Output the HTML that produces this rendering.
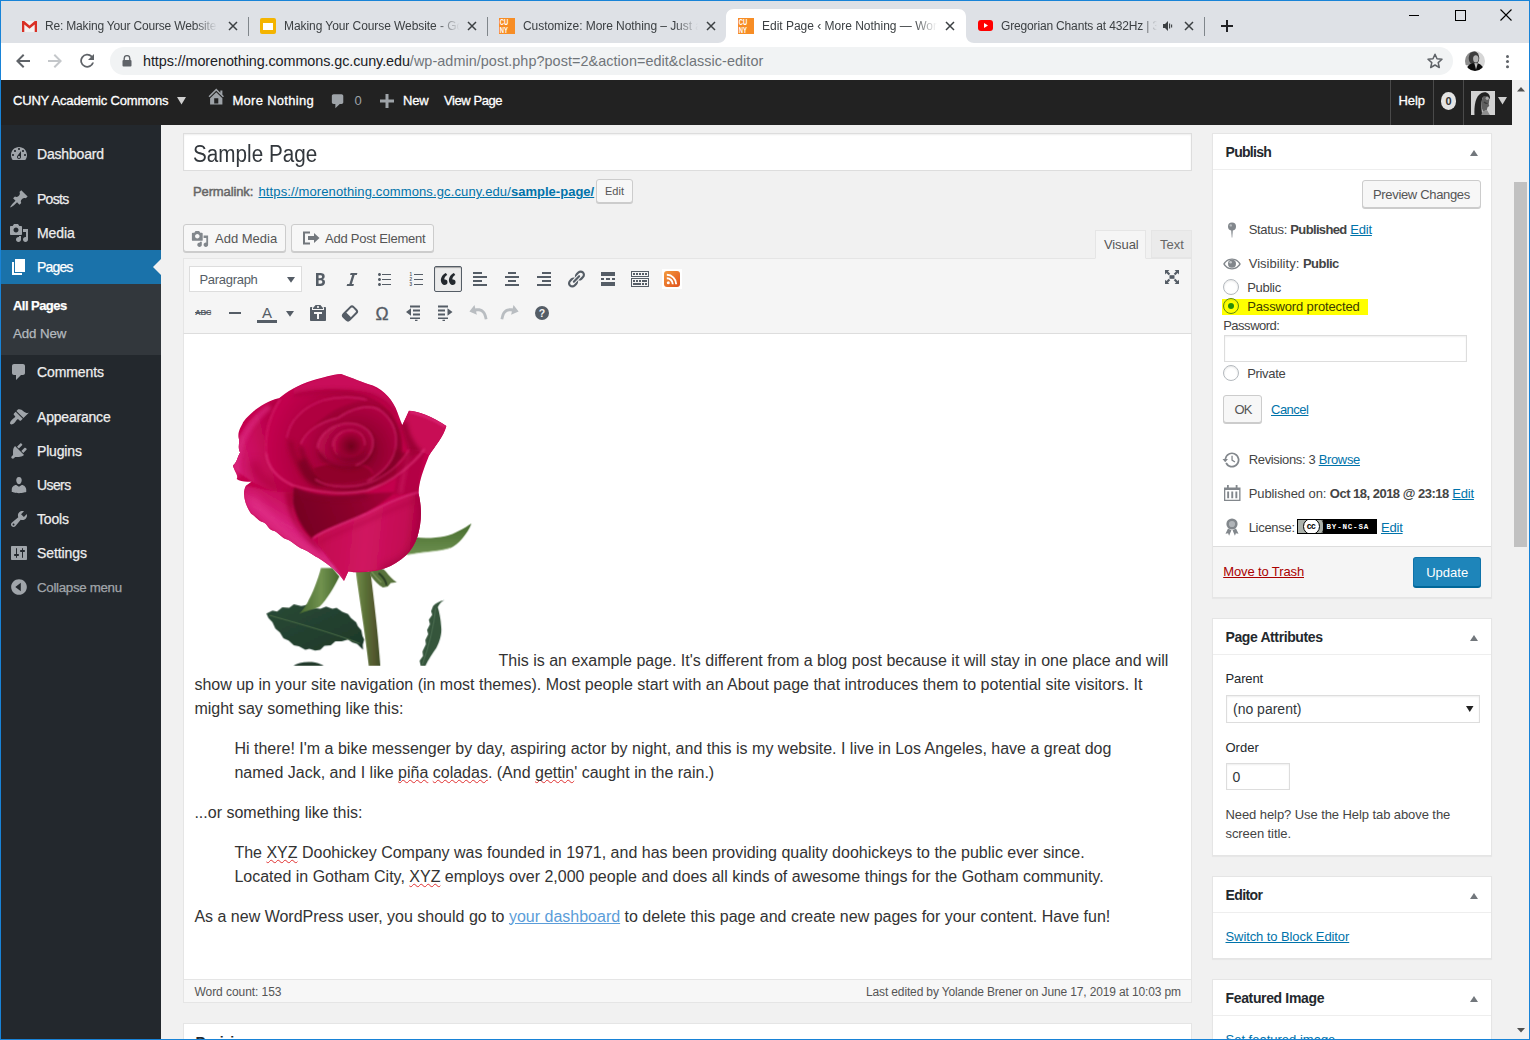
<!DOCTYPE html>
<html>
<head>
<meta charset="utf-8">
<title>Edit Page</title>
<style>
*{box-sizing:border-box;margin:0;padding:0}
html,body{width:1530px;height:1040px;overflow:hidden;background:#f1f1f1;font-family:"Liberation Sans",sans-serif;}
body{position:relative}
.abs{position:absolute}
.t{position:absolute;white-space:nowrap;line-height:1}
a{color:#0073aa;text-decoration:underline}
/* ---------- chrome frame ---------- */
#frame{position:absolute;left:0;top:0;width:1530px;height:1040px;border:1px solid #1883d7;pointer-events:none;z-index:100}
#tabstrip{position:absolute;left:0;top:0;width:1530px;height:43px;background:#dee1e6}
#toolbar{position:absolute;left:0;top:43px;width:1530px;height:37px;background:#fff}
#pill{position:absolute;left:110px;top:47px;width:1343px;height:28px;border-radius:14px;background:#f1f3f4}
.tabt{position:absolute;top:19px;font-size:12px;color:#3c4043;white-space:nowrap;line-height:14px;overflow:hidden;letter-spacing:0}
.tabx{position:absolute;top:20px;width:12px;height:12px}
.tsep{position:absolute;top:17px;width:1px;height:19px;background:#80868b}
#acttab{position:absolute;left:729px;top:9px;width:238px;height:33px;background:#fff;border-radius:8px 8px 0 0}

.cuny{width:16px;height:16px;background:#f68b1f;overflow:hidden}
.cuny:before{content:"CU";position:absolute;left:1px;top:0px;font:bold 7.5px/8px "Liberation Sans",sans-serif;color:#fff;letter-spacing:-0.3px;transform:scale(0.9,1.1);transform-origin:0 0}
.cuny:after{content:"NY";position:absolute;left:1px;top:8px;font:bold 7.5px/8px "Liberation Sans",sans-serif;color:#fff;letter-spacing:-0.3px;transform:scale(0.9,1.1);transform-origin:0 0}
/* ---------- wp admin bar ---------- */
#wpbar{position:absolute;left:1px;top:80px;width:1511px;height:45px;background:#222}
.wb{position:absolute;top:93px;font-size:13px;color:#fff;white-space:nowrap;line-height:15px;letter-spacing:-0.1px;-webkit-text-stroke:0.3px #fff}
/* ---------- sidebar ---------- */
#side{position:absolute;left:1px;top:125px;width:160px;height:915px;background:#23282d}
.mi{position:absolute;left:37px;-webkit-text-stroke:0.25px;font-size:14px;color:#eee;white-space:nowrap;line-height:16px;letter-spacing:-0.15px}
.ic{position:absolute;left:9px;width:20px;height:20px;fill:#a0a5aa}

/* ---------- main ---------- */
.btn{position:absolute;background:#f7f7f7;border:1px solid #ccc;border-radius:3px;box-shadow:0 1px 0 #ccc;color:#555;font-size:13px;text-align:center;white-space:nowrap}
.tb{position:absolute;width:20px;height:20px;fill:#555d66}
#ed p{margin:0 0 16px 0}
#ed blockquote{margin:0 40px 16px 40px}
u.sp{text-decoration:underline wavy #e03030;text-decoration-thickness:1px;text-underline-offset:0.5px;text-decoration-skip-ink:none}

/* ---------- right ---------- */
.box{position:absolute;background:#fff;border:1px solid #e5e5e5;box-shadow:0 1px 1px rgba(0,0,0,.04)}
.hd{position:absolute;font:bold 14px/17px "Liberation Sans",sans-serif;color:#23282d;white-space:nowrap}
.r{position:absolute;font-size:13px;line-height:16px;color:#444;white-space:nowrap;margin-top:1px}
.tri{position:absolute;width:8px;height:6px;fill:#72777c}
.rad{position:absolute;width:16px;height:16px;border-radius:8px;background:#fff;border:1px solid #b4b9be;box-shadow:inset 0 1px 2px rgba(0,0,0,.1)}
/* ---------- scrollbar ---------- */
#sb{position:absolute;left:1512px;top:80px;width:17px;height:959px;background:#f1f1f1}
#sbt{position:absolute;left:1514px;top:182px;width:13px;height:365px;background:#c1c1c1}
</style>
</head>
<body>
<!-- CHROME -->
<div id="tabstrip"></div>
<svg class="abs" style="left:716px;top:9px" width="260" height="34" viewBox="716 9 260 34"><path d="M718 43C722 43 726 40 726 35L726 17C726 12 729 9 734 9L958 9C963 9 966 12 966 17L966 35C966 40 970 43 974 43Z" fill="#fff"/></svg>
<div id="toolbar"></div>
<div id="pill"></div>

<!-- tab 1 -->
<svg class="abs" style="left:22px;top:21px" width="15" height="11" viewBox="0 0 15 11"><rect x="0" y="0" width="15" height="11" fill="#f2f2f2"/><path d="M0 0h2.2l5.3 4.6L12.8 0H15v11h-2.3V3.4L7.5 7.8 2.3 3.4V11H0z" fill="#d93025"/></svg>
<div class="tabt" style="letter-spacing:-0.18px;left:45px;width:172px;-webkit-mask-image:linear-gradient(90deg,#000 150px,transparent 172px)">Re: Making Your Course Website</div>
<svg class="tabx" style="left:227px" viewBox="0 0 12 12"><path d="M2 2l8 8M10 2l-8 8" stroke="#3c4043" stroke-width="1.5" fill="none"/></svg>
<div class="tsep" style="left:248px"></div>
<!-- tab 2 -->
<div class="abs" style="left:260px;top:18px;width:16px;height:16px;border-radius:2px;background:#f4b400"></div>
<div class="abs" style="left:263px;top:23px;width:10px;height:7px;background:#fff"></div>
<div class="tabt" style="letter-spacing:-0.07px;left:284px;width:176px;-webkit-mask-image:linear-gradient(90deg,#000 152px,transparent 176px)">Making Your Course Website - Google Slides</div>
<svg class="tabx" style="left:466px" viewBox="0 0 12 12"><path d="M2 2l8 8M10 2l-8 8" stroke="#3c4043" stroke-width="1.5" fill="none"/></svg>
<div class="tsep" style="left:487px"></div>
<!-- tab 3 -->
<svg class="abs" style="left:499px;top:18px" width="16" height="16" viewBox="0 0 16 16"><rect width="16" height="16" fill="#f78d25"/><g fill="#fff" font-family="Liberation Sans" font-weight="bold" font-size="8.200"><text transform="translate(0.800 7.300) scale(0.720 1.120)">CU</text><text transform="translate(0.800 15.200) scale(0.720 1.120)">NY</text></g></svg>
<div class="tabt" style="letter-spacing:-0.06px;left:523px;width:175px;-webkit-mask-image:linear-gradient(90deg,#000 152px,transparent 175px)">Customize: More Nothing – Just another</div>
<svg class="tabx" style="left:705px" viewBox="0 0 12 12"><path d="M2 2l8 8M10 2l-8 8" stroke="#3c4043" stroke-width="1.5" fill="none"/></svg>
<!-- tab 4 active -->
<svg class="abs" style="left:738px;top:18px" width="16" height="16" viewBox="0 0 16 16"><rect width="16" height="16" fill="#f78d25"/><g fill="#fff" font-family="Liberation Sans" font-weight="bold" font-size="8.200"><text transform="translate(0.800 7.300) scale(0.720 1.120)">CU</text><text transform="translate(0.800 15.200) scale(0.720 1.120)">NY</text></g></svg>
<div class="tabt" style="letter-spacing:-0.01px;left:762px;width:175px;-webkit-mask-image:linear-gradient(90deg,#000 152px,transparent 175px)">Edit Page ‹ More Nothing — WordPress</div>
<svg class="tabx" style="left:944px" viewBox="0 0 12 12"><path d="M2 2l8 8M10 2l-8 8" stroke="#3c4043" stroke-width="1.5" fill="none"/></svg>
<!-- tab 5 -->
<svg class="abs" style="left:978px;top:20px" width="15" height="11" viewBox="0 0 15 11"><rect width="15" height="11" rx="3" fill="#f00"/><path d="M6 3l4 2.5L6 8z" fill="#fff"/></svg>
<div class="tabt" style="letter-spacing:-0.16px;left:1001px;width:156px;-webkit-mask-image:linear-gradient(90deg,#000 142px,transparent 156px)">Gregorian Chants at 432Hz | 3 Hours</div>
<svg class="abs" style="left:1162px;top:20px" width="12" height="12" viewBox="0 0 12 12"><path d="M1 4h2l3-3v10L3 8H1z" fill="#3c4043"/><path d="M7.6 3.5v5M9.6 4.5v3" stroke="#3c4043" stroke-width="1.1"/></svg>
<svg class="tabx" style="left:1183px" viewBox="0 0 12 12"><path d="M2 2l8 8M10 2l-8 8" stroke="#3c4043" stroke-width="1.5" fill="none"/></svg>
<div class="tsep" style="left:1204px"></div>
<svg class="abs" style="left:1220px;top:19px" width="14" height="14" viewBox="0 0 14 14"><path d="M7 1v12M1 7h12" stroke="#202124" stroke-width="2"/></svg>
<!-- window controls -->
<div class="abs" style="left:1409px;top:15px;width:10px;height:1px;background:#000"></div>
<div class="abs" style="left:1455px;top:10px;width:11px;height:11px;border:1px solid #000"></div>
<svg class="abs" style="left:1500px;top:9px" width="12" height="12" viewBox="0 0 12 12"><path d="M0.5 0.5l11 11M11.5 0.5l-11 11" stroke="#000" stroke-width="1.1"/></svg>
<!-- nav -->
<svg class="abs" style="left:15px;top:53px" width="16" height="16" viewBox="0 0 16 16"><path d="M15 7H4.8l4.6-4.6L8 1 1 8l7 7 1.4-1.4L4.8 9H15z" fill="#5f6368"/></svg>
<svg class="abs" style="left:47px;top:53px" width="16" height="16" viewBox="0 0 16 16"><path d="M1 7h10.2L6.6 2.4 8 1l7 7-7 7-1.4-1.4L11.2 9H1z" fill="#c4c7ca"/></svg>
<svg class="abs" style="left:79px;top:53px" width="16" height="16" viewBox="0 0 16 16"><path d="M13.2 2.8A7 7 0 1 0 15 9.5h-1.9A5.2 5.2 0 1 1 11.9 4.1L9 7h6V1z" fill="#5f6368"/></svg>
<svg class="abs" style="left:122px;top:55px" width="10" height="12" viewBox="0 0 10 12"><path d="M2.2 5V3.4a2.8 2.8 0 0 1 5.6 0V5" stroke="#5f6368" stroke-width="1.4" fill="none"/><rect x="0.5" y="5" width="9" height="6.5" rx="1" fill="#5f6368"/></svg>
<div class="t" id="url" style="left:143px;top:53px;font-size:14.4px;line-height:17px;color:#70757a;letter-spacing:0.06px"><span style="color:#202124;letter-spacing:-0.084px">https://morenothing.commons.gc.cuny.edu</span>/wp-admin/post.php?post=2&amp;action=edit&amp;classic-editor</div>
<svg class="abs" style="left:1426px;top:52px" width="18" height="18" viewBox="0 0 18 18"><path d="M9 2.2l2 4.6 5 .5-3.8 3.3 1.1 4.9L9 13l-4.3 2.5 1.1-4.9L2 7.3l5-.5z" fill="none" stroke="#5f6368" stroke-width="1.5" stroke-linejoin="round"/></svg>
<svg class="abs" style="left:1465px;top:51px" width="20" height="20" viewBox="0 0 20 20"><defs><clipPath id="cav"><circle cx="10" cy="10" r="10"/></clipPath><filter id="fav"><feGaussianBlur stdDeviation="0.55"/></filter></defs><g clip-path="url(#cav)"><rect width="20" height="20" fill="#d6d6d6"/><g filter="url(#fav)"><rect x="-2" y="-2" width="8" height="16" fill="#8c8c8c"/><ellipse cx="9" cy="7" rx="5.300" ry="6.800" fill="#3c3c3c"/><ellipse cx="10.800" cy="7.800" rx="2.700" ry="3.600" fill="#b4b4b4"/><path d="M1 21C2 14 6 11.500 9.500 12.500 13 11.500 18 13 19.500 21Z" fill="#101010"/><path d="M9.300 12L11 18.500 12.800 12.200Z" fill="#bdbdbd"/></g></g></svg>
<div class="abs" style="left:1506px;top:55px;width:3px;height:3px;border-radius:2px;background:#5f6368;box-shadow:0 5.100px 0 #5f6368,0 10.200px 0 #5f6368"></div>

<!-- WP ADMIN BAR -->
<div id="wpbar"></div>

<div class="wb" style="left:13px;letter-spacing:-0.19px">CUNY Academic Commons</div>
<svg class="abs" style="left:177px;top:97px" width="9" height="8" viewBox="0 0 9 8"><path d="M0 0h9L4.5 7.5z" fill="#d0d0d0"/></svg>
<svg class="abs" style="left:206.200px;top:85.600px" width="20.500" height="20.500" viewBox="0 0 20 20"><path d="M16 8.5l1.53 1.53-1.06 1.06L10 4.620l-6.470 6.470-1.060-1.060L10 2.500l4 4v-2h2v4zm-6-2.460l6 5.990V18H4v-5.970zM12 17v-5H8v5h4z" fill="#9ea3a8"/></svg>
<div class="wb" style="left:232.5px;letter-spacing:0.28px">More Nothing</div>
<svg class="abs" style="left:328px;top:92px" width="20" height="20" viewBox="0 0 20 20"><path d="M5 2h9c1.100 0 2 .9 2 2v7c0 1.100-.900 2-2 2h-2l-5 5v-5H5c-1.100 0-2-.900-2-2V4c0-1.100.900-2 2-2z" fill="#9ea3a8" transform="translate(1.2 0.5) scale(.88)"/></svg>
<div class="wb" style="left:354.5px;color:#9ea3a8;-webkit-text-stroke:0">0</div>
<svg class="abs" style="left:380px;top:94px" width="14" height="14" viewBox="0 0 14 14"><path d="M5.500 0h3v5.500H14v3H8.500V14h-3V8.500H0v-3h5.500z" fill="#9ea3a8"/></svg>
<div class="wb" style="left:403px;letter-spacing:-0.15px">New</div>
<div class="wb" style="left:444px;letter-spacing:-0.42px">View Page</div>
<div class="abs" style="left:1390px;top:80px;width:1px;height:45px;background:#4a4a4a"></div>
<div class="abs" style="left:1433px;top:80px;width:1px;height:45px;background:#4a4a4a"></div>
<div class="abs" style="left:1463px;top:80px;width:1px;height:45px;background:#4a4a4a"></div>
<div class="wb" style="left:1398.500px;letter-spacing:-0.1px">Help</div>
<div class="abs" style="left:1441px;top:92px;width:15px;height:18px;border-radius:8px/9px;background:#e4e4e4;color:#333;font:bold 11px/18px 'Liberation Sans',sans-serif;text-align:center">0</div>
<svg class="abs" id="wpav" style="left:1471px;top:91px" width="24" height="24" viewBox="0 0 24 24"><defs><filter id="fwp"><feGaussianBlur stdDeviation="0.6"/></filter><clipPath id="cwp"><rect width="24" height="24"/></clipPath></defs><g clip-path="url(#cwp)"><rect width="24" height="24" fill="#d2d2d2"/><g filter="url(#fwp)"><path d="M3.500 25C3 14 4.500 5 10.500 2 15.500 0 19 3 19 7L17.500 9C16.500 6 14 5 12 6 10 10 10 16 11.500 25Z" fill="#242424"/><path d="M12 6C15 4 18.500 6 18.300 9L17.700 13 18.300 15 16.500 16.200 15.800 19 12 20.500C10 16 10 10 12 6Z" fill="#5e5e5e"/><ellipse cx="16.200" cy="7.300" rx="1.600" ry="1.800" fill="#a8a8a8"/><path d="M10 25L11.500 20.500 16 19 19.500 25Z" fill="#8e8e8e"/><path d="M13 11C14 12 15 12.500 16.500 12.500" stroke="#3a3a3a" stroke-width="1.200" fill="none"/></g></g></svg>
<svg class="abs" style="left:1498px;top:97px" width="9" height="8" viewBox="0 0 9 8"><path d="M0 0h9L4.500 7.500z" fill="#d0d0d0"/></svg>

<!-- SIDEBAR -->
<div id="side"></div>

<div class="abs" style="left:1px;top:250px;width:160px;height:34px;background:#1a72aa"></div>
<div class="abs" style="left:1px;top:284px;width:160px;height:71px;background:#32373c"></div>
<div class="abs" style="left:153px;top:259px;width:0;height:0;border:8px solid transparent;border-right-color:#f1f1f1;border-left:0"></div>
<svg class="ic" style="top:144px" viewBox="0 0 20 20"><path d="M3.760 16h12.480c1.100-1.370 1.760-3.110 1.760-5 0-4.420-3.580-8-8-8s-8 3.580-8 8c0 1.890.660 3.630 1.760 5zM10 4c.550 0 1 .450 1 1s-.450 1-1 1-1-.450-1-1 .450-1 1-1zM6 6c.550 0 1 .450 1 1s-.450 1-1 1-1-.450-1-1 .450-1 1-1zm8 0c.550 0 1 .450 1 1s-.450 1-1 1-1-.450-1-1 .450-1 1-1zm-5.370 5.550L12 7v6c0 1.100-.900 2-2 2s-2-.900-2-2c0-.570.240-1.080.630-1.450zM4 10c.550 0 1 .450 1 1s-.450 1-1 1-1-.450-1-1 .450-1 1-1zm12 0c.550 0 1 .450 1 1s-.450 1-1 1-1-.450-1-1 .450-1 1-1zm-5 3c0-.550-.450-1-1-1s-1 .450-1 1 .450 1 1 1 1-.450 1-1z"/></svg>
<div class="mi" style="top:146px;letter-spacing:-0.18px">Dashboard</div>
<svg class="ic" style="top:189px" viewBox="0 0 20 20"><path d="M10.440 3.020l1.820-1.820 6.360 6.350-1.830 1.820c-1.050-.680-2.480-.570-3.410.360l-.750.750c-.920.930-1.040 2.350-.350 3.410l-1.830 1.820-2.410-2.410-2.800 2.790c-.420.420-3.380 2.710-3.800 2.290s1.860-3.390 2.280-3.810l2.790-2.790L4.100 9.360l1.830-1.820c1.050.690 2.480.570 3.400-.360l.750-.750c.930-.920 1.050-2.350.360-3.410z"/></svg>
<div class="mi" style="top:191px;letter-spacing:-0.72px">Posts</div>
<svg class="ic" style="top:223px" viewBox="0 0 20 20"><path d="M13 11V4c0-.550-.450-1-1-1h-1.670L9 1H5L3.670 3H2c-.550 0-1 .450-1 1v7c0 .550.450 1 1 1h10c.550 0 1-.450 1-1zM7 4.500c1.380 0 2.500 1.120 2.500 2.500S8.380 9.500 7 9.500 4.500 8.380 4.500 7 5.620 4.500 7 4.500zM14 6h5v10.500c0 1.380-1.120 2.500-2.500 2.500S14 17.880 14 16.500s1.120-2.500 2.500-2.500c.170 0 .340.020.5.050V9h-3V6zm-4 8.050V13h2v3.500c0 1.380-1.120 2.500-2.500 2.500S7 17.880 7 16.500 8.120 14 9.500 14c.170 0 .340.020.5.050z"/></svg>
<div class="mi" style="top:225px;letter-spacing:-0.10px">Media</div>
<svg class="ic" style="top:257px;fill:#fff" viewBox="0 0 20 20"><path d="M6 15V2h10v13H6zm-1 1h8v2H3V5h2v11z"/></svg>
<div class="mi" style="top:259px;color:#fff;letter-spacing:-0.84px">Pages</div>
<div class="mi" style="left:13px;top:298px;font-size:13px;font-weight:bold;color:#fff;letter-spacing:-0.55px">All Pages</div>
<div class="mi" style="left:13px;top:326px;font-size:13.3px;color:#b4b9be;letter-spacing:-0.1px">Add New</div>
<svg class="ic" style="top:362px" viewBox="0 0 20 20"><path d="M5 2h9c1.100 0 2 .900 2 2v7c0 1.100-.900 2-2 2h-2l-5 5v-5H5c-1.100 0-2-.900-2-2V4c0-1.100.900-2 2-2z"/></svg>
<div class="mi" style="top:364px;letter-spacing:-0.11px">Comments</div>
<svg class="ic" style="top:407px" viewBox="0 0 20 20"><path d="M14.480 11.060L7.410 3.990l1.500-1.500c.500-.560 2.300-.470 3.510.320 1.210.800 1.430 1.280 2.910 2.100 1.180.640 2.450 1.260 4.450.850zm-.710.710L6.700 4.700 4.930 6.470c-.390.390-.390 1.020 0 1.410l1.060 1.060c.390.390.390 1.030 0 1.420-.600.600-1.430 1.110-2.210 1.690-.350.260-.700.530-1.010.840C1.430 14.230.400 16.080 1.400 17.070c.990 1 2.840-.030 4.180-1.360.310-.310.580-.660.850-1.020.570-.780 1.080-1.610 1.690-2.210.390-.390 1.020-.390 1.410 0l1.060 1.060c.390.390 1.020.390 1.410 0z"/></svg>
<div class="mi" style="top:409px;letter-spacing:-0.20px">Appearance</div>
<svg class="ic" style="top:441px" viewBox="0 0 20 20"><path d="M13.110 4.360L9.870 7.600 8 5.730l3.240-3.240c.350-.340 1.050-.200 1.560.320.520.510.660 1.210.310 1.550zm-8 1.770l.910-1.120 9.010 9.010-1.190.840c-.710.710-2.630 1.160-3.820 1.160H6.140L4.900 17.260c-.590.590-1.540.590-2.120 0-.590-.580-.590-1.530 0-2.120l1.240-1.240v-3.880c0-1.130.400-3.190 1.090-3.890zm7.260 3.970l3.240-3.240c.340-.350 1.040-.210 1.550.310.520.510.660 1.210.310 1.550l-3.240 3.250z"/></svg>
<div class="mi" style="top:443px;letter-spacing:-0.17px">Plugins</div>
<svg class="ic" style="top:475px" viewBox="0 0 20 20"><path d="M10 9.250c-2.270 0-2.730-3.440-2.730-3.440C7 4.020 7.820 2 9.970 2c2.160 0 2.980 2.020 2.710 3.810 0 0-.410 3.440-2.680 3.440zm0 2.570L12.720 10c2.390 0 4.520 2.330 4.520 4.530v2.490s-3.650 1.130-7.240 1.130c-3.650 0-7.240-1.130-7.240-1.130v-2.490c0-2.250 1.940-4.480 4.470-4.480z"/></svg>
<div class="mi" style="top:477px;letter-spacing:-0.60px">Users</div>
<svg class="ic" style="top:509px" viewBox="0 0 20 20"><path d="M16.680 9.770c-1.340 1.340-3.300 1.670-4.950.990l-5.410 6.520c-.990.990-2.590.990-3.580 0s-.990-2.590 0-3.570l6.520-5.420c-.680-1.650-.350-3.610.990-4.950 1.280-1.280 3.120-1.620 4.720-1.060l-2.890 2.890 2.820 2.820 2.860-2.870c.530 1.580.180 3.390-1.080 4.650zM3.810 16.210c.400.390 1.040.390 1.430 0 .400-.400.400-1.040 0-1.430-.390-.400-1.030-.400-1.430 0-.390.390-.390 1.030 0 1.430z"/></svg>
<div class="mi" style="top:511px;letter-spacing:-0.18px">Tools</div>
<svg class="ic" style="top:543px" viewBox="0 0 20 20"><path d="M18 16V4c0-.550-.450-1-1-1H3c-.550 0-1 .450-1 1v12c0 .550.450 1 1 1h14c.550 0 1-.450 1-1zM8 11h1c.550 0 1 .450 1 1s-.450 1-1 1H8v1.500c0 .280-.220.500-.5.500s-.5-.220-.5-.5V13H6c-.550 0-1-.450-1-1s.450-1 1-1h1V5.500c0-.280.220-.5.500-.5s.5.220.5.500V11zm5-2h-1c-.550 0-1-.450-1-1s.450-1 1-1h1V5.500c0-.280.220-.5.500-.5s.5.220.5.500V7h1c.550 0 1 .450 1 1s-.450 1-1 1h-1v5.500c0 .280-.220.500-.5.500s-.5-.220-.5-.5V9z"/></svg>
<div class="mi" style="top:545px;letter-spacing:-0.10px">Settings</div>
<svg class="ic" style="top:577px" viewBox="0 0 20 20"><path d="M10 2.160c4.330 0 7.840 3.510 7.840 7.840s-3.510 7.840-7.840 7.840S2.160 14.330 2.160 10 5.670 2.160 10 2.160zM11.800 14.200V5.800L6.300 10z" fill-rule="evenodd"/></svg>
<div class="mi" style="top:580px;font-size:13.3px;color:#a0a5aa;letter-spacing:-0.30px">Collapse menu</div>

<!-- SCROLLBAR -->
<div id="sb"></div><div id="sbt"></div>


<!-- title -->
<div class="abs" style="left:183px;top:133px;width:1009px;height:38px;background:#fff;border:1px solid #ddd;box-shadow:inset 0 1px 2px rgba(0,0,0,.07)"></div>
<div class="t" style="left:192.500px;top:139.700px;font-size:23.300px;line-height:28px;color:#32373c;transform:scaleX(0.888);transform-origin:0 0">Sample Page</div>
<!-- permalink -->
<div class="t" style="left:193px;top:184px;font-size:13px;line-height:16px;color:#666"><span style="letter-spacing:-0.13px;-webkit-text-stroke:0.45px #666">Permalink:</span></div>
<div class="t" style="left:258.500px;top:184px;font-size:13px;line-height:16px;letter-spacing:0.12px"><a>https://morenothing.commons.gc.cuny.edu/<b style="letter-spacing:0.02px">sample-page/</b></a></div>
<div class="btn" style="left:596px;top:179px;width:37px;height:24px;font-size:11px;line-height:22px">Edit</div>
<!-- media buttons -->
<div class="btn" style="left:183px;top:224px;width:103px;height:28px"></div>
<svg class="abs" style="left:190px;top:229px" width="20" height="20" viewBox="0 0 20 20"><path fill="#82878c" d="M13 11V4c0-.550-.450-1-1-1h-1.670L9 1H5L3.670 3H2c-.550 0-1 .450-1 1v7c0 .550.450 1 1 1h10c.550 0 1-.450 1-1zM7 4.500c1.380 0 2.500 1.120 2.500 2.500S8.380 9.500 7 9.500 4.500 8.380 4.500 7 5.620 4.500 7 4.500zM14 6h5v10.500c0 1.380-1.120 2.500-2.500 2.500S14 17.880 14 16.500s1.120-2.500 2.500-2.500c.170 0 .340.020.5.050V9h-3V6zm-4 8.050V13h2v3.500c0 1.380-1.120 2.500-2.500 2.500S7 17.880 7 16.500 8.120 14 9.500 14c.170 0 .340.020.5.050z" transform="translate(1 1) scale(.9)"/></svg>
<div class="t" style="left:215px;top:231px;font-size:13px;line-height:16px;color:#555">Add Media</div>
<div class="btn" style="left:291px;top:224px;width:143px;height:28px"></div>
<svg class="abs" style="left:302px;top:230px" width="18" height="16" viewBox="0 0 18 16"><path fill="none" stroke="#72777c" stroke-width="2" d="M8 2.500H2v11h6"/><path fill="#72777c" d="M6 6h6V3l5.500 5-5.500 5v-3H6z"/></svg>
<div class="t" style="left:325px;top:231px;font-size:13px;line-height:16px;color:#555;letter-spacing:-0.23px">Add Post Element</div>
<!-- tabs -->
<div class="abs" style="left:1095px;top:230px;width:51px;height:29px;background:#f5f5f5;border:1px solid #e5e5e5;border-bottom-color:#f5f5f5;z-index:3"></div>
<div class="t" style="left:1104px;top:237px;font-size:13px;line-height:16px;color:#555;z-index:4;letter-spacing:-0.1px">Visual</div>
<div class="abs" style="left:1151px;top:230px;width:41px;height:28px;background:#ebebeb;border:1px solid #e5e5e5"></div>
<div class="t" style="left:1160px;top:237px;font-size:13px;line-height:16px;color:#666">Text</div>
<!-- toolbar -->
<div class="abs" style="left:183px;top:258px;width:1009px;height:76px;background:#f5f5f5;border:1px solid #e5e5e5;border-bottom:1px solid #ddd"></div>
<div class="abs" style="left:189px;top:266px;width:113px;height:26px;background:#fff;border:1px solid #ddd"></div>
<div class="t" style="left:199.500px;top:272px;font-size:13px;line-height:16px;color:#555d66;letter-spacing:-0.3px">Paragraph</div>
<svg class="abs" style="left:287px;top:277px" width="8" height="6" viewBox="0 0 8 6"><path d="M0 0h8L4 5.800z" fill="#555d66"/></svg>
<!-- row1 icons -->
<svg class="tb" style="left:310px;top:269px" viewBox="0 0 20 20"><path d="M6 4v13h4.540c1.370 0 2.460-.330 3.260-1 .800-.660 1.200-1.580 1.200-2.770 0-.840-.170-1.510-.510-2.010s-.900-.850-1.670-1.030v-.090c.570-.100 1.020-.400 1.360-.900s.510-1.130.510-1.910c0-1.140-.390-1.980-1.170-2.500C12.750 4.260 11.500 4 9.780 4H6zm2.570 5.150V6.260h1.360c.730 0 1.270.110 1.610.320.340.220.510.580.510 1.070 0 .540-.160.920-.470 1.150s-.820.350-1.510.350h-1.500zm0 2.190h1.600c1.440 0 2.160.530 2.160 1.610 0 .600-.170 1.050-.510 1.340s-.860.430-1.570.430H8.570v-3.380z"/></svg>
<svg class="tb" style="left:342px;top:269px" viewBox="0 0 20 20"><path d="M14.780 6h-2.130l-2.800 9h2.120l-.620 2H4.600l.620-2h2.140l2.800-9H8.030l.620-2h6.750z"/></svg>
<svg class="tb" style="left:374px;top:269px" viewBox="0 0 20 20"><path d="M5.500 7C4.670 7 4 6.330 4 5.500 4 4.680 4.670 4 5.500 4 6.320 4 7 4.680 7 5.500 7 6.330 6.320 7 5.500 7zM8 5h9v1H8V5zm-2.500 7c-.830 0-1.500-.670-1.500-1.500C4 9.680 4.670 9 5.500 9c.820 0 1.500.680 1.500 1.500 0 .830-.680 1.500-1.500 1.500zM8 10h9v1H8v-1zm-2.500 7c-.830 0-1.500-.670-1.500-1.500 0-.820.670-1.500 1.500-1.500.820 0 1.500.680 1.500 1.500 0 .830-.680 1.500-1.500 1.500zM8 15h9v1H8v-1z"/></svg>
<svg class="tb" style="left:406px;top:269px" viewBox="0 0 20 20"><path d="M8 5h9v1H8zM8 10h9v1H8zM8 15h9v1H8z"/><text x="3.600" y="7" font-size="4.600" font-family="Liberation Sans" font-weight="bold">1</text><text x="3.600" y="12.200" font-size="4.600" font-family="Liberation Sans" font-weight="bold">2</text><text x="3.600" y="17.400" font-size="4.600" font-family="Liberation Sans" font-weight="bold">3</text></svg>
<div class="abs" style="left:434px;top:266px;width:28px;height:26px;background:#ebebeb;border:1px solid #555d66;border-radius:2px;box-shadow:inset 0 1px 1px rgba(0,0,0,.3)"></div>
<svg class="tb" style="left:438px;top:269px;fill:#23282d" viewBox="0 0 20 20"><path d="M9.490 13.220c0-.740-.200-1.380-.610-1.900-.620-.780-1.830-.880-2.530-.720-.290-1.650 1.110-3.750 2.920-4.650L7.880 4c-2.730 1.300-5.420 4.280-4.960 8.050C3.210 14.430 4.590 16 6.540 16c.850 0 1.560-.250 2.120-.750s.830-1.180.830-2.030zm8.050 0c0-.740-.200-1.380-.610-1.900-.630-.780-1.830-.880-2.530-.720-.290-1.650 1.110-3.750 2.920-4.650L15.930 4c-2.730 1.300-5.410 4.280-4.950 8.050.290 2.380 1.660 3.950 3.610 3.950.850 0 1.560-.250 2.120-.750s.830-1.180.830-2.030z"/></svg>
<svg class="tb" style="left:470px;top:269px" viewBox="0 0 20 20"><path d="M12 5V3H3v2h9zm5 4V7H3v2h14zm-5 4v-2H3v2h9zm5 4v-2H3v2h14z"/></svg>
<svg class="tb" style="left:502px;top:269px" viewBox="0 0 20 20"><path d="M14 5V3H6v2h8zm3 4V7H3v2h14zm-3 4v-2H6v2h8zm3 4v-2H3v2h14z"/></svg>
<svg class="tb" style="left:534px;top:269px" viewBox="0 0 20 20"><path d="M17 5V3H8v2h9zm0 4V7H3v2h14zm0 4v-2H8v2h9zm0 4v-2H3v2h14z"/></svg>
<svg class="tb" style="left:566px;top:269px" viewBox="0 0 20 20"><path d="M17.740 2.760c1.680 1.690 1.680 4.410 0 6.100l-1.530 1.520c-1.120 1.120-2.700 1.470-4.140 1.090l2.620-2.610.760-.770.760-.760c.840-.840.840-2.200 0-3.040-.840-.850-2.200-.850-3.040 0l-.770.760-3.380 3.380c-.370-1.440-.020-3.020 1.100-4.140l1.520-1.530c1.690-1.680 4.420-1.680 6.100 0zM8.590 13.430l5.340-5.340c.420-.420.420-1.100 0-1.520-.440-.430-1.130-.390-1.530 0l-5.330 5.340c-.420.420-.420 1.100 0 1.520.440.430 1.130.390 1.520 0zm-.760 2.290l4.140-4.150c.380 1.440.030 3.020-1.090 4.140l-1.520 1.530c-1.690 1.680-4.410 1.680-6.100 0-1.680-1.680-1.680-4.420 0-6.100l1.530-1.520c1.120-1.120 2.700-1.470 4.140-1.100l-4.140 4.150c-.850.840-.850 2.200 0 3.050.840.840 2.200.840 3.040 0z"/></svg>
<svg class="tb" style="left:598px;top:269px" viewBox="0 0 20 20"><path d="M17 7V3H3v4h14zM6 11V9H3v2h3zm6 0V9H8v2h4zm5 0V9h-3v2h3zm0 6v-4H3v4h14z"/></svg>
<svg class="tb" style="left:630px;top:269px" viewBox="0 0 20 20"><path d="M19 2v6H1V2h18zm-1 5V3H2v4h16zM5 4v2H3V4h2zm3 0v2H6V4h2zm3 0v2H9V4h2zm3 0v2h-2V4h2zm3 0v2h-2V4h2zm2 5v9H1V9h18zm-1 8v-7H2v7h16zM5 11v2H3v-2h2zm3 0v2H6v-2h2zm3 0v2H9v-2h2zm6 0v2h-5v-2h5zm-6 3v2H3v-2h8zm3 0v2h-2v-2h2zm3 0v2h-2v-2h2z"/></svg>
<div class="abs" style="left:662px;top:269px;width:20px;height:20px;background:#fff"></div>
<svg class="abs" style="left:664px;top:271px" width="16" height="16" viewBox="0 0 16 16"><defs><linearGradient id="rs" x1="0" y1="0" x2="1" y2="1"><stop offset="0" stop-color="#f39a3c"/><stop offset="1" stop-color="#e0501c"/></linearGradient></defs><rect width="16" height="16" rx="3" fill="url(#rs)"/><circle cx="4.300" cy="11.700" r="1.500" fill="#fff"/><path d="M2.800 7.200a6 6 0 0 1 6 6M2.800 3.800a9.400 9.400 0 0 1 9.400 9.400" fill="none" stroke="#fff" stroke-width="1.900"/></svg>
<!-- fullscreen -->
<svg class="abs" style="left:1164px;top:269px" width="16" height="16" viewBox="0 0 16 16"><g fill="#555d66"><path d="M0 0h5L3.400 1.600 6 4.200 4.200 6 1.600 3.400 0 5zM16 0v5l-1.600-1.600L11.800 6 10 4.200l2.600-2.600L11 0zM0 16v-5l1.600 1.600L4.200 10 6 11.800l-2.600 2.600L5 16zM16 16h-5l1.600-1.600L10 11.800l1.800-1.800 2.600 2.600L16 11z" transform="translate(1 1) scale(.875)"/><rect x="5.500" y="6.200" width="5" height="3.600"/></g></svg>
<!-- row2 icons -->
<div class="t" style="left:195px;top:308px;font:bold 8px/10px 'Liberation Sans',sans-serif;color:#555d66;letter-spacing:-0.4px;text-decoration:line-through">ABC</div>
<div class="abs" style="left:229px;top:312px;width:12px;height:2px;background:#555d66"></div>
<div class="t" style="left:262px;top:304px;font:15px/17px 'Liberation Sans',sans-serif;color:#555d66">A</div>
<div class="abs" style="left:257px;top:320px;width:20px;height:3px;background:#555d66"></div>
<svg class="abs" style="left:286px;top:311px" width="8" height="6" viewBox="0 0 8 6"><path d="M0 0h8L4 5.800z" fill="#555d66"/></svg>
<svg class="tb" style="left:308px;top:303px" viewBox="0 0 20 20"><path d="M12.380 2L15 5v1H5V5l2.640-3h4.740zM10 5c.550 0 1-.440 1-1 0-.550-.450-1-1-1s-1 .450-1 1c0 .560.450 1 1 1zm5.450-1H17c.550 0 1 .450 1 1v12c0 .560-.450 1-1 1H3c-.550 0-1-.440-1-1V5c0-.550.450-1 1-1h1.550L4 4.630V7h12V4.630zM14 11V9H6v2h3v5h2v-5h3z"/></svg>
<svg class="tb" style="left:340px;top:303px" viewBox="0 0 20 20"><g transform="rotate(-45 10 10.500)"><rect x="3" y="6.300" width="14" height="8.400" rx="2.200" fill="none" stroke="#555d66" stroke-width="2"/><rect x="3" y="6.300" width="5" height="8.400" rx="1.500"/></g></svg>
<div class="t" style="left:375.500px;top:303.500px;font:17.500px/20px 'Liberation Sans',sans-serif;color:#555d66;-webkit-text-stroke:0.35px #555d66">Ω</div>
<svg class="tb" style="left:403px;top:303px" viewBox="0 0 20 20"><path d="M7 4h10v2H7zM10 8h7v2h-7zM10 12h7v2h-7zM7 16h10v1.500H7zM12 18.200h2.500v1.300H12zM3 10.500l5-3.800v7.600z" transform="translate(0 -1.500)"/></svg>
<svg class="tb" style="left:435px;top:303px" viewBox="0 0 20 20"><path d="M3 4h10v2H3zM3 8h7v2H3zM3 12h7v2H3zM3 16h10v1.500H3zM7.500 18.200H10v1.300H7.500zM17.500 10.500l-5-3.800v7.600z" transform="translate(0 -1.500)"/></svg>
<svg class="tb" style="left:468px;top:303px;fill:#b9bdc1" viewBox="0 0 20 20"><path d="M2 6.500L8.500 1.500V5C14 5 17.800 8.800 17.800 14.500V18H15V14.500C15 10.500 12.500 8 8.500 8V11.500Z" transform="rotate(-14 10 10)"/></svg>
<svg class="tb" style="left:500px;top:303px;fill:#b9bdc1" viewBox="0 0 20 20"><path d="M18 6.500L11.500 1.500V5C6 5 2.200 8.800 2.200 14.500V18H5V14.500C5 10.500 7.500 8 11.500 8V11.500Z" transform="rotate(14 10 10)"/></svg>
<svg class="tb" style="left:532px;top:303px" viewBox="0 0 20 20"><circle cx="10" cy="10" r="7"/><text x="10" y="13.800" text-anchor="middle" font-size="10.500" font-family="Liberation Sans" font-weight="bold" fill="#f5f5f5">?</text></svg>
<!-- editor area -->
<div class="abs" style="left:183px;top:334px;width:1009px;height:645px;background:#fff;border-left:1px solid #e5e5e5;border-right:1px solid #e5e5e5"></div>
<div class="abs" id="ed" style="left:194.400px;top:365.500px;width:988px;font-size:16px;line-height:24px;color:#333">
<p><span class="abs" id="rose" style="left:0;top:0px;width:300px;height:300px"><!--ROSE--><svg viewBox="0 0 1040 1040" width="300" height="300" style="display:block">
<defs>
<filter id="b1" filterUnits="userSpaceOnUse" x="0" y="0" width="1040" height="1040"><feGaussianBlur stdDeviation="1.6"/></filter>
<filter id="b3" filterUnits="userSpaceOnUse" x="0" y="0" width="1040" height="1040"><feGaussianBlur stdDeviation="3.5"/></filter>
<filter id="b8" filterUnits="userSpaceOnUse" x="0" y="0" width="1040" height="1040"><feGaussianBlur stdDeviation="8"/></filter>
<filter id="b14" filterUnits="userSpaceOnUse" x="0" y="0" width="1040" height="1040"><feGaussianBlur stdDeviation="14"/></filter>
<linearGradient id="gstem" x1="0" x2="1" y1="0" y2="0"><stop offset="0" stop-color="#748c4c"/><stop offset=".4" stop-color="#5a7036"/><stop offset=".75" stop-color="#55592f"/><stop offset="1" stop-color="#3f4f28"/></linearGradient>
<linearGradient id="gleaf" x1="0" x2="1" y1="0" y2="1"><stop offset="0" stop-color="#2a4a36"/><stop offset="1" stop-color="#1d3829"/></linearGradient>
<linearGradient id="gsepR" x1="0" x2="0" y1="0" y2="1"><stop offset="0" stop-color="#466d2e"/><stop offset="1" stop-color="#6e9050"/></linearGradient>
<linearGradient id="gsepL" x1="0" x2="1" y1="0" y2="0"><stop offset="0" stop-color="#486a2f"/><stop offset=".55" stop-color="#71924f"/><stop offset="1" stop-color="#47682e"/></linearGradient>
<radialGradient id="rg2" gradientUnits="userSpaceOnUse" cx="570" cy="300" r="310"><stop offset="0" stop-color="#800026"/><stop offset=".4" stop-color="#960031"/><stop offset=".72" stop-color="#b00041"/><stop offset="1" stop-color="#c2044e"/></radialGradient>
<radialGradient id="rg3" gradientUnits="userSpaceOnUse" cx="560" cy="300" r="175"><stop offset="0" stop-color="#780022"/><stop offset=".55" stop-color="#980033"/><stop offset="1" stop-color="#b20444"/></radialGradient>
<radialGradient id="rgr2" gradientUnits="userSpaceOnUse" cx="545" cy="290" r="105"><stop offset="0" stop-color="#760020"/><stop offset=".6" stop-color="#9c0035"/><stop offset="1" stop-color="#b80a4c"/></radialGradient>
<radialGradient id="rgr1" gradientUnits="userSpaceOnUse" cx="545" cy="278" r="60"><stop offset="0" stop-color="#6e001c"/><stop offset=".7" stop-color="#a00036"/><stop offset="1" stop-color="#bb0a4c"/></radialGradient>
<linearGradient id="gcup" gradientUnits="userSpaceOnUse" x1="350" y1="560" x2="680" y2="430"><stop offset="0" stop-color="#740022"/><stop offset=".55" stop-color="#8a002b"/><stop offset="1" stop-color="#a40039"/></linearGradient>
<linearGradient id="gfront" gradientUnits="userSpaceOnUse" x1="430" y1="560" x2="800" y2="600"><stop offset="0" stop-color="#c2064e"/><stop offset=".45" stop-color="#d01660"/><stop offset=".8" stop-color="#c40a54"/><stop offset="1" stop-color="#a8003e"/></linearGradient>
<linearGradient id="gll" gradientUnits="userSpaceOnUse" x1="330" y1="440" x2="240" y2="600"><stop offset="0" stop-color="#c20852"/><stop offset=".55" stop-color="#d8207a"/><stop offset="1" stop-color="#cf1468"/></linearGradient>
<linearGradient id="glo" gradientUnits="userSpaceOnUse" x1="140" y1="300" x2="300" y2="260"><stop offset="0" stop-color="#d21a70"/><stop offset=".5" stop-color="#c80a5a"/><stop offset="1" stop-color="#b40044"/></linearGradient>
<clipPath id="cb"><path id="bloomp" d="M510 28C545 40 590 60 620 68 660 85 690 120 705 160L722 205 745 155C770 155 830 175 875 208 865 245 835 280 815 310 795 360 780 400 778 440 790 490 790 540 775 590 760 640 720 680 660 702 620 715 570 718 535 712L520 745C500 715 470 690 430 665 405 652 395 640 370 632 350 622 340 606 318 600 300 592 292 574 272 570 256 566 254 546 240 542 222 538 214 520 198 512 176 480 166 440 180 415L200 400C180 404 160 400 148 392 155 380 140 365 135 345 150 335 150 315 160 300 150 280 160 265 155 250 150 225 165 210 170 195 195 160 250 120 295 112 320 90 360 65 410 50 450 40 480 30 510 28Z"/></clipPath>
</defs>
<!-- leaves -->
<g filter="url(#b1)">
<path d="M251 858L272 848 288 851 306 836 330 838 346 826 372 832 392 828 414 838 438 842 458 834 480 842 494 838 514 852 534 860 544 874 562 888 568 902 580 916 584 936 590 948 585 966 586 984 566 964 548 958 534 948 512 954 490 954 474 968 452 970 438 984 420 986 400 980 386 984 364 972 346 968 328 952 310 944 298 924 282 910 272 888 258 874Z" fill="url(#gleaf)"/>
<path d="M262 864C350 890 470 920 575 962" stroke="#4d7048" stroke-width="3.500" fill="none" opacity=".85"/>
<path d="M869 811C850 815 838 822 829 832L822 850 826 862 814 880 818 895 808 915 812 930 802 950 804 965 792 990 794 1005 782 1022 786 1040 802 1040C812 1020 828 995 840 978 852 955 860 928 857 905 856 880 850 850 845 836 852 822 860 815 869 811Z" fill="#34543b"/>
<path d="M838 840C832 900 815 970 792 1035" stroke="#55775a" stroke-width="4" fill="none" opacity=".7"/>
<path d="M344 1040C360 1028 390 1024 420 1028 435 1032 445 1036 450 1040Z" fill="#20392a"/>
<!-- stem -->
<path d="M561 712C572 800 590 900 606 1040L646 1040C636 900 622 800 612 712Z" fill="url(#gstem)"/>
<!-- sepals -->
<path d="M605 705C625 696 650 696 665 712 675 725 690 742 703 750L682 752 672 764 655 768C640 760 625 745 615 730Z" fill="#58733c"/>
<path d="M640 718C655 730 665 745 668 760" stroke="#2d4226" stroke-width="7" fill="none"/><path d="M615 712C625 725 635 738 650 750" stroke="#7a9458" stroke-width="5" fill="none"/>
<path d="M722 656C740 625 755 600 768 594 800 598 840 596 870 590 905 583 940 560 962 546 948 582 918 618 888 632 850 644 800 642 765 650Z" fill="url(#gsepR)"/>
<path d="M740 655C790 644 850 644 890 630" stroke="#b8cca8" stroke-width="3" fill="none"/>
<path d="M440 700C430 740 410 790 398 810 390 830 375 850 363 860 385 850 415 845 435 835 460 810 485 770 504 730L480 700Z" fill="url(#gsepL)"/>
</g>
<!-- bloom -->
<g filter="url(#b1)"><use href="#bloomp" fill="#c4034e"/></g>
<g clip-path="url(#cb)">
 <!-- outer left petal -->
 <path d="M120 345C140 250 200 150 300 108 270 150 250 200 246 260 248 310 262 350 300 390L345 420 345 470 200 400Z" fill="url(#glo)" filter="url(#b3)"/>
 <path d="M150 385C142 300 172 210 262 140" stroke="#dc2a80" stroke-width="18" fill="none" filter="url(#b8)" opacity=".75"/>
 <path d="M210 330C212 380 250 410 300 420" stroke="#ad003c" stroke-width="30" fill="none" filter="url(#b14)" opacity=".75"/>
 <!-- top back petals -->
 <path d="M345 78C400 55 460 35 510 28 560 45 620 65 660 95 690 120 700 150 705 165 680 130 640 100 590 90 500 75 410 80 345 100Z" fill="#c90a5a" filter="url(#b3)"/>
 <!-- layer-2 petal (big, wraps): radial shading -->
 <path d="M248 300C246 240 262 170 300 112 380 88 470 82 540 88 600 96 660 124 690 172 715 210 725 260 720 300 760 300 790 295 800 288 760 340 690 400 600 432 520 450 420 437 345 415 290 390 252 350 248 300Z" fill="url(#rg2)" filter="url(#b3)"/>
 <path d="M345 100C420 84 520 80 600 96 650 108 685 138 702 170" stroke="#a2003a" stroke-width="9" fill="none" filter="url(#b8)" opacity=".9"/>
 <path d="M300 114C262 172 246 240 250 300" stroke="#d4206c" stroke-width="5" fill="none" filter="url(#b3)" opacity=".9"/>
 <!-- a mid petal between layer2 and ring3 (upper left) -->
 <path d="M322 250C330 190 380 140 450 118 500 105 560 105 600 118 560 120 500 140 460 170 410 205 385 250 380 300 378 340 395 380 430 400 380 385 325 330 322 250Z" fill="#b00041" filter="url(#b3)"/>
 <path d="M322 250C330 190 380 140 450 118 500 105 560 105 600 118" stroke="#d42470" stroke-width="4.500" fill="none" filter="url(#b3)" opacity=".85" opacity=".9"/>
 <path d="M335 260C345 330 385 385 440 405" stroke="#96002f" stroke-width="18" fill="none" filter="url(#b8)" opacity=".8"/>
 <!-- right curled petal -->
 <path d="M700 330C740 320 780 300 802 284 790 340 780 400 778 440 740 445 710 450 690 445 700 420 705 380 700 330Z" fill="#b40044" filter="url(#b3)"/>
 <path d="M748 298C733 350 722 400 716 442" stroke="#d22469" stroke-width="9" fill="none" filter="url(#b8)" opacity=".85"/>
 <!-- flap -->
 <path d="M722 205L745 155C770 155 830 175 875 208 865 245 835 280 815 310 800 300 770 292 745 292Z" fill="#c80a55" filter="url(#b1)"/>
 <path d="M716 200C728 245 738 275 744 298L795 302C765 270 745 240 738 190Z" fill="#9c0036" filter="url(#b8)"/>
 <path d="M748 158C800 170 840 190 872 210" stroke="#da2874" stroke-width="8" fill="none" filter="url(#b3)"/>
 <!-- ring 3 shadow + ring 3 -->
 <path d="M370 271C385 230 430 195 500 180 540 150 600 130 640 150 680 175 705 220 700 270 700 320 660 370 600 400 540 420 480 415 440 395 400 370 378 320 370 271Z" fill="#7f0026" filter="url(#b14)" transform="translate(10 14)" opacity=".75"/>
 <path d="M370 271C385 230 430 195 500 180 540 150 600 130 640 150 680 175 705 220 700 270 700 320 660 370 600 400 540 420 480 415 440 395 400 370 378 320 370 271Z" fill="url(#rg3)" filter="url(#b3)"/>
 <path d="M372 282C385 340 420 385 470 405" stroke="#8e002c" stroke-width="14" fill="none" filter="url(#b8)"/>
 <path d="M370 271C385 230 430 195 500 180 540 150 600 130 640 150 680 175 705 220 700 270 700 320 660 370 600 400" stroke="#d62a72" stroke-width="5" fill="none" filter="url(#b3)" opacity=".85"/>
 <path d="M360 330C370 380 395 410 430 418L470 410C430 390 400 360 385 320Z" fill="#7a0024" filter="url(#b8)" opacity=".85"/>
 <path d="M640 400C690 375 715 330 720 300L700 290C700 330 675 370 630 392Z" fill="#800027" filter="url(#b8)" opacity=".85"/>
 <!-- rim of layer-2 (bright) -->
 <path d="M250 300C254 350 290 390 345 415 420 437 520 450 600 432 690 400 760 340 800 288" stroke="#e23a80" stroke-width="6" fill="none" filter="url(#b3)" opacity=".85"/>
 <path d="M420 393C470 425 560 425 620 400 690 370 730 320 745 290" stroke="#d8286f" stroke-width="5" fill="none" filter="url(#b3)" opacity=".85"/>
 <path d="M640 402C700 377 742 332 762 297" stroke="#9c0036" stroke-width="12" fill="none" filter="url(#b8)" opacity=".85"/>
 <!-- lower dark bowl petal -->
 <path d="M414 350C450 335 520 330 570 340 600 345 620 360 618 375 590 400 520 412 470 405 440 398 420 380 414 350Z" fill="#900029" filter="url(#b3)"/>
 <path d="M414 350C450 335 520 330 570 340 600 345 620 360 618 375" stroke="#b80a48" stroke-width="4" fill="none" filter="url(#b3)"/>
 <!-- ring 2 -->
 <path d="M428 285C430 240 470 210 520 200 570 195 610 215 620 255 625 295 600 330 560 345 510 355 450 340 428 285Z" fill="#780022" filter="url(#b8)" transform="translate(8 10)" opacity=".7"/>
 <path d="M428 285C430 240 470 210 520 200 570 195 610 215 620 255 625 295 600 330 560 345 510 355 450 340 428 285Z" fill="url(#rgr2)" filter="url(#b3)"/>
 <path d="M428 285C430 240 470 210 520 200 570 195 610 215 620 255 625 295 600 330 560 345" stroke="#d83076" stroke-width="4.500" fill="none" filter="url(#b3)" opacity=".85"/>
 <path d="M436 300C450 335 500 350 555 342" stroke="#86002a" stroke-width="10" fill="none" filter="url(#b8)"/>
 <!-- ring 1 -->
 <path d="M480 280C480 245 505 225 540 222 575 222 595 245 592 275 588 305 560 322 530 320 500 318 482 305 480 280Z" fill="url(#rgr1)" filter="url(#b3)"/>
 <path d="M480 280C480 245 505 225 540 222 575 222 595 245 592 275" stroke="#d02a6c" stroke-width="4" fill="none" filter="url(#b3)" opacity=".85"/>
 <path d="M495 300C520 330 570 335 600 308" stroke="#80002a" stroke-width="9" fill="none" filter="url(#b8)"/>
 <!-- lower-left petal -->
 <path d="M180 415C230 425 300 445 350 432L345 500C360 560 390 590 415 600 450 640 490 690 520 745 500 715 470 690 430 665 380 640 320 605 280 575 250 560 230 530 200 515 175 480 165 440 180 415Z" fill="url(#gll)" filter="url(#b3)"/>
 <path d="M195 455C260 535 360 612 500 722" stroke="#e63c90" stroke-width="20" fill="none" filter="url(#b14)" opacity=".8"/>
 <path d="M350 432L345 500C360 560 390 590 415 600L450 650C380 600 325 540 315 435Z" fill="#a60039" filter="url(#b8)" opacity=".85"/>
 <path d="M470 690C485 705 505 725 520 745" stroke="#d868b0" stroke-width="16" fill="none" filter="url(#b8)" opacity=".55"/>
 <!-- dark cup -->
 <path d="M346 420C400 445 480 457 560 447 610 441 660 438 697 438 650 480 560 540 470 565 440 575 420 590 410 599 380 570 350 520 343 470Z" fill="url(#gcup)" filter="url(#b3)"/>
 <path d="M350 432C420 457 520 464 600 450" stroke="#84002a" stroke-width="14" fill="none" filter="url(#b8)" opacity=".8"/>
 <!-- front petal -->
 <path d="M410 599C440 570 520 545 600 510 660 480 720 450 780 436 794 490 794 540 779 590 760 640 720 680 660 702 620 715 570 718 535 712L520 745C490 690 450 640 410 599Z" fill="url(#gfront)" filter="url(#b3)"/>
 <path d="M782 440C800 500 796 570 770 625 748 665 700 695 650 708" stroke="#9e003a" stroke-width="20" fill="none" filter="url(#b14)"/>
 <path d="M412 598C445 571 520 546 600 511 660 481 715 453 778 438" stroke="#e4408a" stroke-width="5" fill="none" filter="url(#b3)" opacity=".85"/>
 <path d="M432 614C472 587 532 567 612 532 670 505 730 478 782 462" stroke="#ae0042" stroke-width="10" fill="none" filter="url(#b8)" opacity=".55"/>
</g>
</svg><!--/ROSE--></span><span style="display:inline-block;width:300px;height:300px;vertical-align:baseline"></span> This is an example page. It's different from a blog post because it will stay in one place and will show up in your site navigation (in most themes). Most people start with an About page that introduces them to potential site visitors. It might say something like this:</p>
<blockquote>Hi there! I'm a bike messenger by day, aspiring actor by night, and this is my website. I live in Los Angeles, have a great dog named Jack, and I like <u class="sp">piña</u> <u class="sp">coladas</u>. (And <u class="sp">gettin</u>' caught in the rain.)</blockquote>
<p>...or something like this:</p>
<blockquote>The <u class="sp">XYZ</u> Doohickey Company was founded in 1971, and has been providing quality doohickeys to the public ever since. Located in Gotham City, <u class="sp">XYZ</u> employs over 2,000 people and does all kinds of awesome things for the Gotham community.</blockquote>
<p>As a new WordPress user, you should go to <a style="color:#5b9dd9">your dashboard</a> to delete this page and create new pages for your content. Have fun!</p>
</div>
<!-- status bar -->
<div class="abs" style="left:183px;top:979px;width:1009px;height:24px;background:#f7f7f7;border:1px solid #e5e5e5;border-top:1px solid #e5e5e5"></div>
<div class="t" style="left:194.500px;top:985px;font-size:12px;line-height:14px;color:#555;letter-spacing:-0.06px">Word count: 153</div>
<div class="t" style="left:866px;top:985px;font-size:12px;line-height:14px;color:#555;letter-spacing:-0.14px">Last edited by Yolande Brener on June 17, 2019 at 10:03 pm</div>
<!-- next box -->
<div class="abs" style="left:183px;top:1023px;width:1009px;height:40px;background:#fff;border:1px solid #e5e5e5"></div>
<div class="t" style="left:195.500px;top:1033.500px;font:bold 14px/16px 'Liberation Sans',sans-serif;color:#23282d;letter-spacing:-0.5px">Revisions</div>


<!-- PUBLISH BOX -->
<div class="box" style="left:1212px;top:133px;width:280px;height:465px"></div>
<div class="abs" style="left:1213px;top:169px;width:278px;height:1px;background:#eee"></div>
<div class="hd" style="left:1225.500px;top:144px;letter-spacing:-0.7px">Publish</div>
<svg class="tri" style="left:1469.500px;top:150px"><path d="M0 6L4 0l4 6z"/></svg>
<div class="btn" style="left:1362px;top:180px;width:119px;height:28px"></div>
<div class="r" style="left:1373px;top:186px;color:#555;letter-spacing:-0.33px">Preview Changes</div>
<!-- status -->
<svg class="abs" style="left:1226px;top:222px" width="12" height="16" viewBox="0 0 12 16"><circle cx="6" cy="4.600" r="4" fill="#82878c"/><path d="M5.200 8h1.600l-.5 7.500h-.6z" fill="#82878c"/><circle cx="4.800" cy="3.400" r="1.200" fill="#b8bcc0"/></svg>
<div class="r" style="left:1248.700px;top:221px"><span style="letter-spacing:-0.31px">Status: </span><b style="letter-spacing:-0.64px">Published</b> <a style="letter-spacing:-0.2px">Edit</a></div>
<!-- visibility -->
<svg class="abs" style="left:1223px;top:258px" width="18" height="12" viewBox="0 0 18 12"><path d="M9 0.500C4.500.500 1.500 3.500.2 6c1.300 2.500 4.300 5.500 8.800 5.500s7.500-3 8.800-5.500C16.500 3.500 13.500.500 9 .500zm0 1.300c3.300 0 5.800 2 7.200 4.200-1.400 2.200-3.900 4.200-7.200 4.200S3.200 8.200 1.800 6C3.200 3.800 5.700 1.800 9 1.800z" fill="#82878c"/><circle cx="9" cy="5.800" r="4" fill="#82878c"/><circle cx="7.600" cy="4.300" r="1.300" fill="#c5c8cb"/></svg>
<div class="r" style="left:1248.700px;top:255px"><span style="letter-spacing:0.03px">Visibility: </span><b style="letter-spacing:-0.55px">Public</b></div>
<div class="rad" style="left:1223px;top:279px"></div>
<div class="r" style="left:1247.200px;top:279px;letter-spacing:-0.28px">Public</div>
<div class="abs" style="left:1222px;top:299px;width:146px;height:16px;background:#ffff00"></div>
<div class="rad" style="left:1223px;top:298px;background:#ffff00;border-color:#5f8a10"></div>
<div class="abs" style="left:1228px;top:303px;width:6px;height:6px;border-radius:3px;background:#2a8c0a"></div>
<div class="r" style="left:1247.200px;top:298px;letter-spacing:-0.14px;color:#3c3c00">Password protected</div>
<div class="r" style="left:1223.200px;top:317px;letter-spacing:-0.49px">Password:</div>
<div class="abs" style="left:1224px;top:335px;width:243px;height:27px;background:#fff;border:1px solid #ddd;box-shadow:inset 0 1px 2px rgba(0,0,0,.07)"></div>
<div class="rad" style="left:1223px;top:365px"></div>
<div class="r" style="left:1247.200px;top:365px;letter-spacing:-0.33px">Private</div>
<div class="btn" style="left:1223px;top:395px;width:39px;height:28px"></div>
<div class="r" style="left:1234.400px;top:401px;color:#555;letter-spacing:-0.8px">OK</div>
<div class="r" style="left:1271px;top:401px;letter-spacing:-0.5px"><a>Cancel</a></div>
<!-- revisions -->
<svg class="abs" style="left:1222px;top:451px" width="19" height="18" viewBox="0 0 19 18"><path d="M10 1.500A7.500 7.500 0 1 1 3.300 12.400l1.500-.8A5.800 5.800 0 1 0 4.200 8H6L3.200 11.200.5 8h2A7.500 7.500 0 0 1 10 1.500z" fill="#82878c"/><path d="M9.400 4.800h1.300v4l2.600 1.600-.7 1.100-3.200-2z" fill="#82878c"/></svg>
<div class="r" style="left:1248.700px;top:451px"><span style="letter-spacing:-0.34px">Revisions: 3 </span><a style="letter-spacing:-0.35px">Browse</a></div>
<!-- published on -->
<svg class="abs" style="left:1224px;top:485px" width="17" height="16" viewBox="0 0 17 16"><path d="M0 2.500h16.500V16H0zM1.300 5v9.700h13.900V5z" fill="#82878c" fill-rule="evenodd"/><path d="M3 0h1.800v3.800H3zM11.700 0h1.800v3.800h-1.800zM3.200 6.600h1.900v6.600H3.200zM7.300 6.600h1.900v6.600H7.300zM11.400 6.600h1.900v6.600h-1.900z" fill="#82878c"/></svg>
<div class="r" style="left:1248.700px;top:485px"><span style="letter-spacing:-0.09px">Published on: </span><b style="letter-spacing:-0.51px">Oct 18, 2018 @ 23:18</b> <a style="letter-spacing:-0.2px">Edit</a></div>
<!-- license -->
<svg class="abs" style="left:1224px;top:518px" width="16" height="18" viewBox="0 0 16 18"><circle cx="8" cy="6" r="5.600" fill="#82878c"/><circle cx="8" cy="6" r="3.100" fill="#b0b4b8"/><path d="M4 10.500L1.500 15.800l2.600-.5 1 2.400 2.300-5.500zM12 10.500l2.500 5.300-2.600-.5-1 2.400-2.300-5.500z" fill="#82878c"/></svg>
<div class="r" style="left:1248.700px;top:519px;letter-spacing:-0.3px">License:</div>
<div class="abs" style="left:1297px;top:519px;width:80px;height:15px;background:#000;border:1px solid #000;overflow:hidden"><div class="abs" style="left:0;top:0;width:25px;height:13px;background:#abb1aa"></div><div class="abs" style="left:4.500px;top:-2px;width:17px;height:17px;border-radius:9px;background:#fff;border:1.500px solid #000"></div><div class="abs" style="left:4.500px;top:0px;width:17px;font:bold 8.500px/12px 'Liberation Sans',sans-serif;text-align:center;letter-spacing:-0.5px;color:#000">cc</div><div class="abs" style="left:21px;top:-1px;width:5px;height:15px;border-radius:0 8px 8px 0/0 8px 8px 0;border-right:1.500px solid #000;"></div><div class="abs" style="left:28.500px;top:2.500px;font:bold 7.500px/9px 'Liberation Mono',monospace;color:#fff;letter-spacing:0.82px;white-space:nowrap">BY-NC-SA</div></div>
<div class="r" style="left:1381px;top:519px"><a style="letter-spacing:-0.2px">Edit</a></div>
<!-- footer -->
<div class="abs" style="left:1213px;top:546px;width:278px;height:51px;background:#f5f5f5;border-top:1px solid #ddd"></div>
<div class="r" style="left:1223.200px;top:563px;letter-spacing:-0.12px"><a style="color:#a00">Move to Trash</a></div>
<div class="abs" style="left:1413px;top:557px;width:68px;height:30px;background:#1e85ba;border:1px solid #0f73aa;border-bottom-color:#006799;border-radius:3px;box-shadow:0 1px 0 #006799"></div>
<div class="r" style="left:1426.200px;top:564px;color:#fff">Update</div>
<!-- PAGE ATTRIBUTES -->
<div class="box" style="left:1212px;top:618px;width:280px;height:238px"></div>
<div class="abs" style="left:1213px;top:654px;width:278px;height:1px;background:#eee"></div>
<div class="hd" style="left:1225.500px;top:629px;letter-spacing:-0.39px">Page Attributes</div>
<svg class="tri" style="left:1469.500px;top:635px"><path d="M0 6L4 0l4 6z"/></svg>
<div class="r" style="left:1225.500px;top:670px;color:#23282d;letter-spacing:-0.13px">Parent</div>
<div class="abs" style="left:1226px;top:695px;width:254px;height:28px;background:#fff;border:1px solid #ddd;box-shadow:inset 0 1px 2px rgba(0,0,0,.07)"></div>
<div class="r" style="left:1233px;top:700px;font-size:14px;line-height:17px;color:#32373c">(no parent)</div>
<svg class="abs" style="left:1466px;top:706px" width="8" height="6" viewBox="0 0 8 6"><path d="M0 0h7.500L3.750 6z" fill="#222"/></svg>
<div class="r" style="left:1225.500px;top:739px;color:#23282d">Order</div>
<div class="abs" style="left:1226px;top:763px;width:64px;height:27px;background:#fff;border:1px solid #ddd;box-shadow:inset 0 1px 2px rgba(0,0,0,.07)"></div>
<div class="r" style="left:1232.500px;top:768px;font-size:14px;line-height:17px;color:#32373c">0</div>
<div class="r" style="left:1225.500px;top:806px;letter-spacing:-0.08px">Need help? Use the Help tab above the</div>
<div class="r" style="left:1225.500px;top:825px;letter-spacing:-0.08px">screen title.</div>
<!-- EDITOR BOX -->
<div class="box" style="left:1212px;top:876px;width:280px;height:83px"></div>
<div class="abs" style="left:1213px;top:912px;width:278px;height:1px;background:#eee"></div>
<div class="hd" style="left:1225.500px;top:887px;letter-spacing:-0.6px">Editor</div>
<svg class="tri" style="left:1469.500px;top:893px"><path d="M0 6L4 0l4 6z"/></svg>
<div class="r" style="left:1225.500px;top:928px;letter-spacing:-0.09px"><a>Switch to Block Editor</a></div>
<!-- FEATURED IMAGE BOX -->
<div class="box" style="left:1212px;top:979px;width:280px;height:80px"></div>
<div class="abs" style="left:1213px;top:1015px;width:278px;height:1px;background:#eee"></div>
<div class="hd" style="left:1225.500px;top:990px;letter-spacing:-0.35px">Featured Image</div>
<svg class="tri" style="left:1469.500px;top:996px"><path d="M0 6L4 0l4 6z"/></svg>
<div class="r" style="left:1225.500px;top:1031px"><a>Set featured image</a></div>
<!-- scrollbar arrows -->
<svg class="abs" style="left:1517px;top:87px" width="8" height="5" viewBox="0 0 8 5"><path d="M0 4.500L4 0l4 4.500z" fill="#505050"/></svg>
<svg class="abs" style="left:1516.500px;top:1027.500px" width="8" height="5" viewBox="0 0 8 5"><path d="M0 0h8L4 4.500z" fill="#505050"/></svg>

<div id="frame"></div>
</body>
</html>
